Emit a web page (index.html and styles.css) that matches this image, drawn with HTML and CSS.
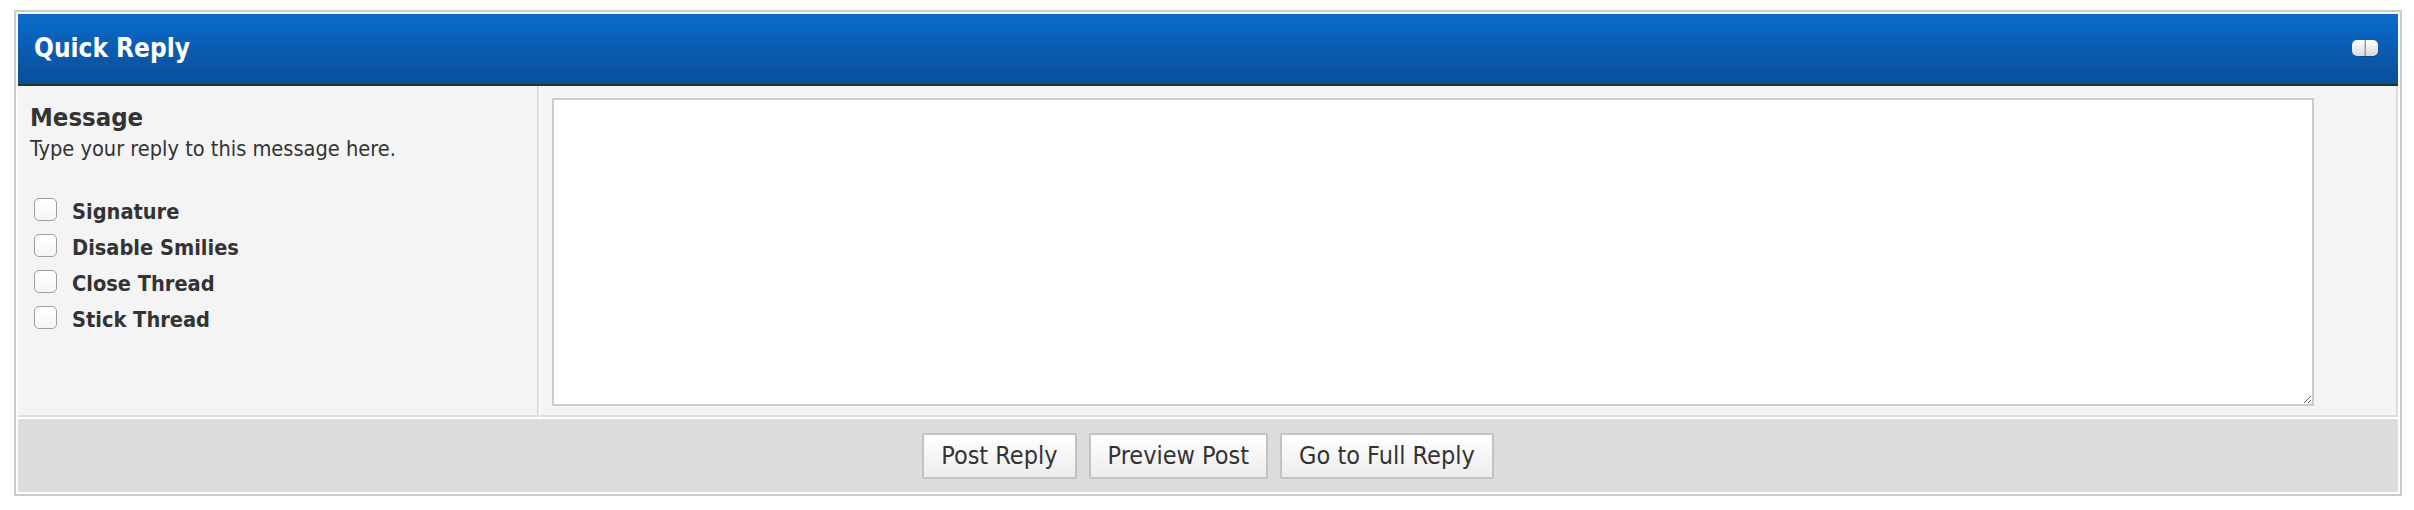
FILE: index.html
```html
<!DOCTYPE html>
<html lang="en">
<head>
    <meta charset="UTF-8">
    <title>Quick Reply</title>
    <link rel="stylesheet" href="styles.css">
</head>
<body>
    <div class="quick-reply">
        <div class="qr-header">
            <h2>Quick Reply</h2>
            <button class="collapse-btn" title="Collapse">
                <svg width="30" height="20" viewBox="0 0 30 20">
                    <defs>
                        <linearGradient id="pill" x1="0" y1="0" x2="0" y2="1">
                            <stop offset="0" stop-color="#ffffff"/>
                            <stop offset="1" stop-color="#d9d9d9"/>
                        </linearGradient>
                    </defs>
                    <rect x="2" y="3" width="26" height="16" rx="5" fill="#0a3c78" opacity="0.45"/>
                    <rect x="2" y="2" width="26" height="16" rx="5" fill="url(#pill)"/>
                    <rect x="14.5" y="2" width="1.5" height="16" fill="#9a9a9a"/>
                </svg>
            </button>
        </div>

        <div class="qr-row">
            <div class="qr-side">
                <h3>Message</h3>
                <p class="hint">Type your reply to this message here.</p>
                <ul class="options">
                    <li><label><input type="checkbox"> Signature</label></li>
                    <li><label><input type="checkbox"> Disable Smilies</label></li>
                    <li><label><input type="checkbox"> Close Thread</label></li>
                    <li><label><input type="checkbox"> Stick Thread</label></li>
                </ul>
            </div>
            <div class="qr-editor">
                <textarea name="message"></textarea>
            </div>
        </div>

        <div class="qr-footer">
            <button class="btn">Post Reply</button>
            <button class="btn">Preview Post</button>
            <button class="btn">Go to Full Reply</button>
        </div>
    </div>
</body>
</html>
```

FILE: styles.css
```css
body {
    margin: 0;
    background: #fff;
    font-family: "DejaVu Sans Condensed", "DejaVu Sans", sans-serif;
    font-stretch: condensed;
    color: #333;
}
.quick-reply {
    margin: 10px 12px 0 14px;
    border: 2px solid #cccccc;
    padding: 2px;
    background: #fff;
}
.qr-header {
    height: 72px;
    box-sizing: border-box;
    border-bottom: 2px solid #24352c;
    background: linear-gradient(#0b6bcb, #0a4e98);
    display: flex;
    align-items: center;
    justify-content: space-between;
    padding: 0 18px 3px 16px;
}
.qr-header h2 {
    margin: 0;
    color: #fff;
    font-size: 26px;
    font-weight: bold;
}
.collapse-btn {
    background: none;
    border: none;
    padding: 0;
    cursor: pointer;
    display: flex;
}
.qr-row {
    display: grid;
    grid-template-columns: 521px 1fr;
    column-gap: 1px;
}
.qr-side,
.qr-editor {
    background: #f4f4f4;
    border-right: 2px solid #dddddd;
    border-bottom: 2px solid #dddddd;
}
.qr-side {
    padding: 16px 12px 0 12px;
}
.qr-side h3 {
    margin: 0;
    font-size: 25.5px;
    line-height: 30px;
    font-weight: bold;
}
.hint {
    margin: 4px 0 0 0;
    font-size: 21.6px;
    line-height: 26px;
}
.options {
    list-style: none;
    margin: 31px 0 0 0;
    padding: 0;
}
.options li {
    height: 36px;
}
.options label {
    display: flex;
    align-items: center;
    height: 36px;
    font-size: 21.6px;
    font-weight: bold;
    cursor: pointer;
}
.options input {
    appearance: none;
    -webkit-appearance: none;
    width: 23px;
    height: 23px;
    margin: 0 15px 3px 4px;
    border: 1px solid #9e9e9e;
    border-radius: 5px;
    background: linear-gradient(#ffffff, #f5f5f5);
}
.qr-editor {
    padding: 12px 82px 9px 12px;
}
.qr-editor textarea {
    display: block;
    box-sizing: border-box;
    width: 100%;
    height: 308px;
    border: 2px solid #cccccc;
    background: #fff;
    margin: 0;
    font-family: inherit;
    font-size: 21px;
}
.qr-footer {
    margin-top: 2px;
    height: 73px;
    background: #dcdcdc;
    display: flex;
    justify-content: center;
    align-items: center;
    gap: 12px;
}
.btn {
    height: 46px;
    padding: 0 17px;
    border: 2px solid #c2c2c2;
    border-radius: 2px;
    background: linear-gradient(#ffffff, #ececec);
    color: #333;
    font-family: inherit;
    font-stretch: condensed;
    font-size: 25px;
    cursor: pointer;
}
.btn:hover {
    background: #f4f4f4;
}
```
